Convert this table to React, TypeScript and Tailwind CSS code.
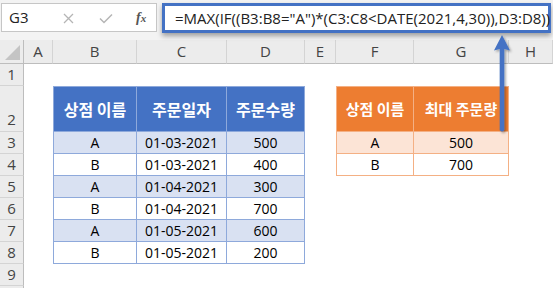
import React from "react";

const colW = ["w-[24px]", "w-[29px]", "w-[84px]", "w-[90px]", "w-[78px]", "w-[31px]", "w-[78px]", "w-[95px]", "flex-1"];
const letters = ["", "A", "B", "C", "D", "E", "F", "G", "H"];

type CellSpec = { text?: string; cls?: string };

function RowHeader({ n, tall }: { n?: number; tall?: boolean }) {
  return (
    <div
      className={`w-[24px] shrink-0 bg-[#ececec] border-r border-b border-r-[#bdbdbd] border-b-[#d4d4d4] flex justify-center ${tall ? "items-end pb-[1px]" : "items-center"} text-[15px] text-[#444]`}
    >
      {n}
    </div>
  );
}

const blueBase = "border-r border-b border-[#8ea9db] flex items-center justify-center";
const orangeBase = "border-r border-b border-[#f4b084] flex items-center justify-center";

function SheetRow({ n, h, cells, tall }: { n?: number; h: string; cells: CellSpec[]; tall?: boolean }) {
  return (
    <div className={`flex ${h}`}>
      <RowHeader n={n} tall={tall} />
      {cells.map((c, i) => (
        <div key={i} className={`${colW[i + 1]} shrink-0 ${c.cls ?? ""}`}>
          {c.text}
        </div>
      ))}
    </div>
  );
}

export default function App() {
  const data = [
    ["A", "01-03-2021", "500"],
    ["B", "01-03-2021", "400"],
    ["A", "01-04-2021", "300"],
    ["B", "01-04-2021", "700"],
    ["A", "01-05-2021", "600"],
    ["B", "01-05-2021", "200"],
  ];
  const res = [
    ["A", "500"],
    ["B", "700"],
  ];
  const hdrBlue = `${blueBase} border-t bg-[#4472c4] text-white font-bold text-[16px] font-['Noto_Sans_CJK_KR',sans-serif]`;
  const hdrOrange = `${orangeBase} border-t bg-[#ed7d31] text-white font-bold text-[15px] font-['Noto_Sans_CJK_KR',sans-serif]`;
  const empty: CellSpec[] = [{}, {}, {}, {}, {}, {}, {}, {}];

  return (
    <div className="w-[553px] h-[288px] overflow-hidden bg-white relative font-['Open_Sans','Noto_Sans_CJK_KR',sans-serif] text-[14px] text-black">
      {/* top bar */}
      <div className="h-[40px] bg-[#f3f3f3] flex items-start pt-[3px] relative z-10">
        <div className="ml-[1px] w-[156px] h-[29px] bg-white border border-[#c6c6c6] flex items-center relative">
          <span className="pl-[7px] text-[15px] text-[#222]">G3</span>
          <svg className="absolute left-[61px] top-[9px]" width="11" height="11" viewBox="0 0 11 11">
            <path d="M1 1 L10 10 M10 1 L1 10" stroke="#b5b5b5" strokeWidth="1.3" fill="none" />
          </svg>
          <svg className="absolute left-[97px] top-[9px]" width="14" height="11" viewBox="0 0 14 11">
            <path d="M1 5.5 L5 9.5 L13 1.5" stroke="#b5b5b5" strokeWidth="1.5" fill="none" />
          </svg>
          <span className="absolute left-[134px] top-[3px] text-[14px] italic font-bold text-[#555] font-['Liberation_Serif',serif]">
            f<span className="text-[11px]">x</span>
          </span>
        </div>
        <div className="ml-[5px] w-[389px] h-[30px] bg-white border-[3px] border-[#4472c4] shadow-[0_3px_5px_rgba(0,0,0,0.35)] flex items-center pl-[10px] text-[15px] text-[#222] whitespace-nowrap">
          =MAX(IF((B3:B8="A")*(C3:C8&lt;DATE(2021,4,30)),D3:D8))
        </div>
      </div>

      {/* column headers */}
      <div className="flex h-[24px]">
        <div className="w-[24px] shrink-0 bg-[#ececec] border-r border-b border-[#bdbdbd] relative">
          <svg className="absolute right-[3px] bottom-[3px]" width="15" height="15" viewBox="0 0 15 15">
            <path d="M15 0 L15 15 L0 15 Z" fill="#c4c4c4" />
          </svg>
        </div>
        {letters.slice(1).map((l, i) => (
          <div
            key={l}
            className={`${colW[i + 1]} shrink-0 bg-[#ececec] border-r border-b border-r-[#d4d4d4] border-b-[#bdbdbd] flex items-center justify-center text-[15px] text-[#444]`}
          >
            {l}
          </div>
        ))}
      </div>

      <SheetRow n={1} h="h-[22px]" cells={empty} />
      <SheetRow
        n={2}
        h="h-[46px]"
        tall
        cells={[
          {},
          { text: "상점 이름", cls: `${hdrBlue} border-l` },
          { text: "주문일자", cls: hdrBlue },
          { text: "주문수량", cls: hdrBlue },
          {},
          { text: "상점 이름", cls: `${hdrOrange} border-l` },
          { text: "최대 주문량", cls: hdrOrange },
          {},
        ]}
      />
      {data.map((r, i) => {
        const bg = i % 2 === 0 ? "bg-[#d9e1f2]" : "bg-white";
        const o = res[i];
        const obg = i === 0 ? "bg-[#fce4d6]" : "bg-white";
        return (
          <SheetRow
            key={i}
            n={i + 3}
            h="h-[22px]"
            cells={[
              {},
              { text: r[0], cls: `${blueBase} border-l ${bg}` },
              { text: r[1], cls: `${blueBase} ${bg}` },
              { text: r[2], cls: `${blueBase} ${bg}` },
              {},
              o ? { text: o[0], cls: `${orangeBase} border-l ${obg}` } : {},
              o ? { text: o[1], cls: `${orangeBase} ${obg}` } : {},
              {},
            ]}
          />
        );
      })}
      <SheetRow n={9} h="h-[22px]" cells={empty} />
      <SheetRow h="h-[22px]" cells={empty} />

      {/* arrow overlay */}
      <svg className="absolute left-[488px] top-[30px] z-20" width="30" height="110" viewBox="0 0 30 110">
        <defs>
          <filter id="sh" x="-50%" y="-20%" width="200%" height="140%">
            <feDropShadow dx="1.5" dy="1.5" stdDeviation="1.2" floodColor="#000" floodOpacity="0.35" />
          </filter>
        </defs>
        <g filter="url(#sh)">
          <path d="M14 5 L22 20.5 L16.3 19 L16.3 100 Q14 103 11.7 100 L11.7 19 L6 20.5 Z" fill="#4472c4" />
        </g>
      </svg>
    </div>
  );
}
